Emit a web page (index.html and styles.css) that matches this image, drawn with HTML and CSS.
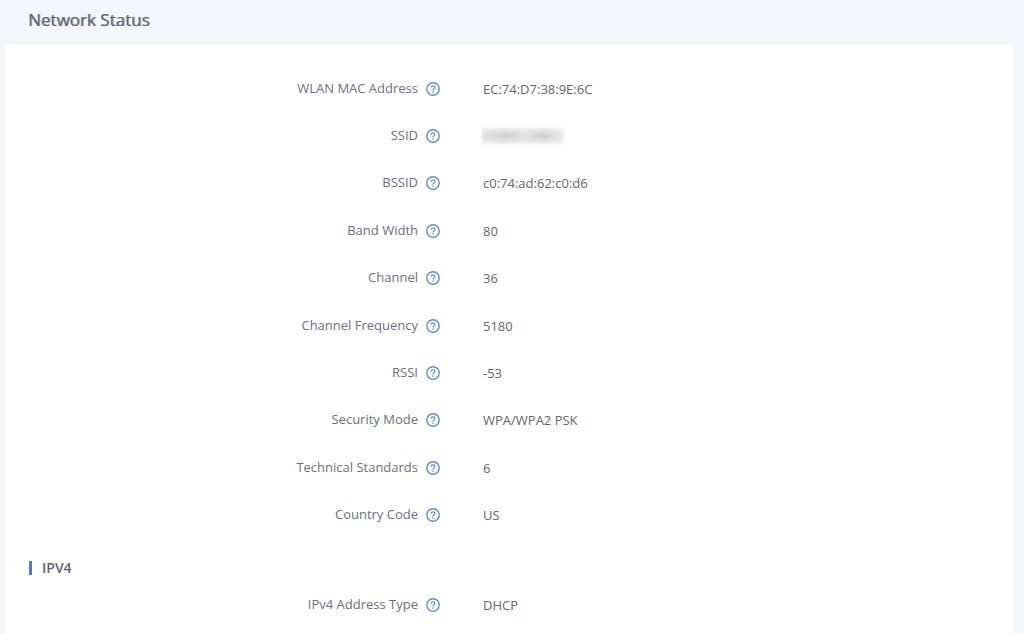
FILE: index.html
```html
<!DOCTYPE html>
<html lang="en">
<head>
    <meta charset="UTF-8">
    <meta name="viewport" content="width=device-width, initial-scale=1">
    <title>Network Status</title>
    <link rel="stylesheet" href="styles.css">
</head>
<body>
    <svg class="sprite" aria-hidden="true">
        <symbol id="help" viewBox="0 0 14 14">
            <circle cx="7" cy="7" r="6.2" fill="none" stroke="currentColor" stroke-width="1.4"/>
            <path d="M5.1 5.6C5.1 4.4 5.9 3.8 7 3.8s1.9.7 1.9 1.7c0 1.3-1.9 1.4-1.9 2.9" fill="none" stroke="currentColor" stroke-width="1.2"/>
            <circle cx="7" cy="10.1" r=".8" fill="currentColor"/>
        </symbol>
    </svg>

    <header class="page-header">
        <h1>Network Status</h1>
    </header>

    <main class="panel">
        <dl class="status-list wlan-list">
            <div class="row">
                <dt>WLAN MAC Address <svg class="help"><use href="#help"/></svg></dt>
                <dd>EC:74:D7:38:9E:6C</dd>
            </div>
            <div class="row">
                <dt>SSID <svg class="help"><use href="#help"/></svg></dt>
                <dd><span class="masked"></span></dd>
            </div>
            <div class="row">
                <dt>BSSID <svg class="help"><use href="#help"/></svg></dt>
                <dd>c0:74:ad:62:c0:d6</dd>
            </div>
            <div class="row">
                <dt>Band Width <svg class="help"><use href="#help"/></svg></dt>
                <dd>80</dd>
            </div>
            <div class="row">
                <dt>Channel <svg class="help"><use href="#help"/></svg></dt>
                <dd>36</dd>
            </div>
            <div class="row">
                <dt>Channel Frequency <svg class="help"><use href="#help"/></svg></dt>
                <dd>5180</dd>
            </div>
            <div class="row">
                <dt>RSSI <svg class="help"><use href="#help"/></svg></dt>
                <dd>-53</dd>
            </div>
            <div class="row">
                <dt>Security Mode <svg class="help"><use href="#help"/></svg></dt>
                <dd>WPA/WPA2 PSK</dd>
            </div>
            <div class="row">
                <dt>Technical Standards <svg class="help"><use href="#help"/></svg></dt>
                <dd>6</dd>
            </div>
            <div class="row">
                <dt>Country Code <svg class="help"><use href="#help"/></svg></dt>
                <dd>US</dd>
            </div>
        </dl>

        <h2>IPV4</h2>
        <dl class="status-list">
            <div class="row">
                <dt>IPv4 Address Type <svg class="help"><use href="#help"/></svg></dt>
                <dd>DHCP</dd>
            </div>
        </dl>
    </main>
</body>
</html>
```
FILE: styles.css
```css
* {
    box-sizing: border-box;
}
body {
    display: flex;
    flex-direction: column;
    min-height: 100vh;
    margin: 0;
    background-color: #f3f7fb;
    color: #666;
    font-family: "Open Sans", "Noto Sans", sans-serif;
    font-size: 13px;
    line-height: 20px;
}
.sprite {
    display: none;
}
.page-header {
    padding: 10px 28px 15px;
}
h1 {
    margin: 0;
    color: #5e6478;
    font-size: 17px;
    font-weight: 400;
    line-height: 20px;
    text-shadow: 1px 0 rgba(94, 100, 120, 0.6);
}
.panel {
    flex: 1;
    margin: 0 10px 0 5px;
    padding: 19px 26px 0 24px;
    background-color: #fff;
}
.status-list {
    display: grid;
    grid-auto-rows: 1fr;
    margin: 0;
}
.wlan-list {
    min-height: 474px;
}
.row {
    display: grid;
    grid-template-columns: 3fr 4fr;
    align-items: center;
    min-height: 47px;
}
dt {
    display: flex;
    justify-content: flex-end;
    align-items: center;
    gap: 8px;
    color: #6b6f7f;
}
dd {
    margin: 0;
    padding: 2px 0 0 43px;
}
.help {
    width: 14px;
    height: 14px;
    margin-top: 2px;
    color: #5b8be0;
}
/* hidden network name */
.masked {
    display: block;
    width: 82px;
    height: 16px;
    margin-left: -1px;
    background:
        linear-gradient(to bottom, rgba(255, 255, 255, 0.5), transparent 40%, transparent 60%, rgba(255, 255, 255, 0.6)),
        linear-gradient(to right, #e2e2e2, #d2d2d2 30%, #e2e2e2 52%, #d2d2d2 75%, #ececec);
    filter: blur(1px);
}
h2 {
    margin: 23px 0 5px;
    padding-left: 10px;
    border-left: 3px solid #4a78dc;
    color: #5e6478;
    font-size: 14px;
    font-weight: 600;
    line-height: 14px;
}
```
